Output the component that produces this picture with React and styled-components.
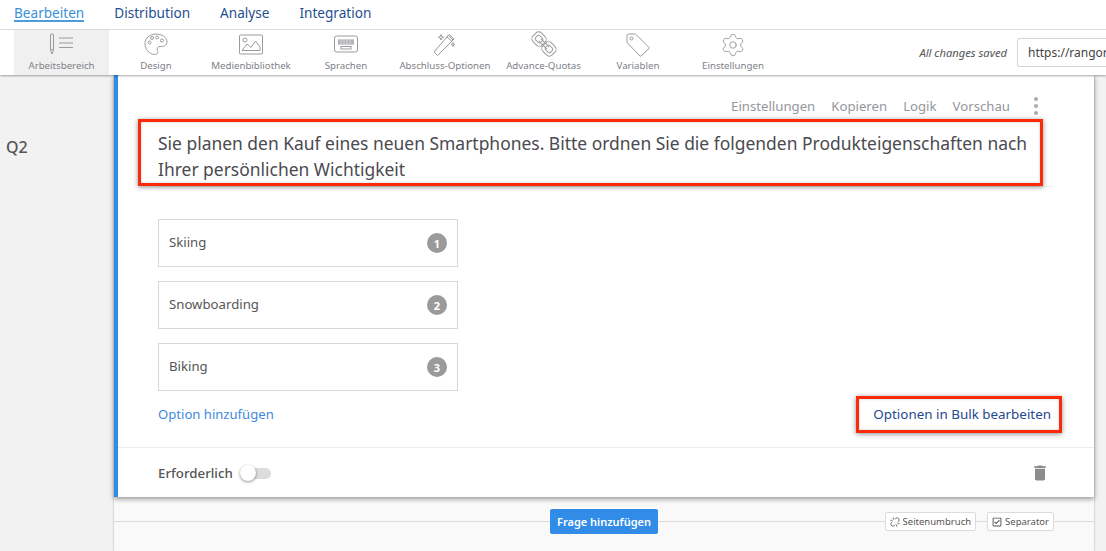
import * as React from 'react'
import styled, { createGlobalStyle } from 'styled-components'
import { Settings, Unlink } from 'lucide-react'
import { FaRegCheckSquare } from 'react-icons/fa'
import { MdDelete } from 'react-icons/md'

const GlobalStyle = createGlobalStyle`
    html, body {
        margin: 0;
        padding: 0;
        background: #f2f2f2;
        overflow: hidden;
    }
    body, button, input {
        font-family: "Noto Sans", "Open Sans", sans-serif;
    }
`;

const Page = styled.div`
    width: 1106px;
    height: 551px;
    overflow: hidden;
    display: flex;
    flex-direction: column;
`;

const Header = styled.header`
    position: relative;
    z-index: 3;
    background: white;
    box-shadow: 0 1px 2px rgba(0, 0, 0, 0.35);
`;

const TopNav = styled.nav`
    height: 29px;
    border-bottom: 1px solid #dcdcdc;
    display: flex;
    padding-left: 14px;
    gap: 30px;
`;

const NavLink = styled.a`
    padding-top: 5px;
    box-sizing: border-box;
    font-size: 13.6px;
    line-height: 16px;
    height: 22px;
    color: ${props => (props.$active ? '#3a8fd9' : '#1f4f8f')};
    border-bottom: ${props => (props.$active ? '2px solid #4a9ddd' : 'none')};
`;

const Toolbar = styled.div`
    height: 45px;
    display: flex;
    padding-left: 14px;
`;

const ToolItem = styled.div`
    flex: none;
    width: ${props => props.$width}px;
    background: ${props => (props.$active ? '#f0f0f0' : 'transparent')};
    display: flex;
    flex-direction: column;
    align-items: center;
`;

const IconSlot = styled.div`
    height: 24px;
    margin-top: 3px;
    display: flex;
    align-items: center;
    justify-content: center;
    color: #999b9f;
    svg {
        display: block;
        flex: none;
        overflow: visible;
    }
`;

const ToolLabel = styled.span`
    font-size: 9.7px;
    line-height: 12px;
    margin-top: 3px;
    color: #7d8187;
    white-space: nowrap;
`;

const SaveArea = styled.div`
    margin-left: auto;
    display: flex;
    align-items: center;
    gap: 10px;
`;

const SavedText = styled.span`
    font-size: 11.2px;
    font-style: italic;
    color: #555;
    white-space: nowrap;
`;

const UrlBox = styled.div`
    width: 89px;
    height: 29px;
    box-sizing: border-box;
    border: 1px solid #d6d6d6;
    border-right: none;
    border-radius: 3px 0 0 3px;
    padding: 0 0 0 10px;
    font-size: 12px;
    line-height: 27px;
    color: #444;
    overflow: hidden;
    white-space: nowrap;
`;

const Body = styled.div`
    flex: 1;
    display: flex;
    min-height: 0;
`;

const Gutter = styled.div`
    width: 114px;
    flex: none;
    padding: 61px 0 0 6px;
    box-sizing: border-box;
    font-size: 16px;
    line-height: 22px;
    font-weight: 500;
    color: #555;
`;

const Column = styled.main`
    width: 980px;
    flex: none;
    display: flex;
    flex-direction: column;
    background: #f9f9f9;
    box-shadow: 0 0 2px rgba(0, 0, 0, 0.3);
`;

const Card = styled.section`
    position: relative;
    height: 422px;
    flex: none;
    box-sizing: border-box;
    background: white;
    border-left: 4px solid #318ce7;
    box-shadow: 0 2px 5px rgba(0, 0, 0, 0.4);
    display: flex;
    flex-direction: column;
    padding-left: 40px;
`;

const ActionRow = styled.div`
    height: 44px;
    padding: 18px 84px 0 0;
    box-sizing: border-box;
    display: flex;
    justify-content: flex-end;
    align-items: center;
    gap: 16px;
    position: relative;
`;

const ActionLink = styled.a`
    font-size: 13.2px;
    color: #94979c;
    white-space: nowrap;
`;

const MoreDots = styled.div`
    position: absolute;
    right: 56px;
    top: 22px;
    display: flex;
    flex-direction: column;
    gap: 3px;
    span {
        width: 4px;
        height: 4px;
        border-radius: 50%;
        background: #aaa;
    }
`;

const Question = styled.h2`
    margin: 11px 40px 0 0;
    padding-bottom: 4px;
    font-size: 17.45px;
    line-height: 26px;
    font-weight: 400;
    color: #4a4a50;
    border-bottom: 1px solid #eee;
`;

const OptionList = styled.div`
    margin-top: 32px;
    display: flex;
    flex-direction: column;
    gap: 14px;
`;

const OptionBox = styled.div`
    width: 300px;
    height: 48px;
    box-sizing: border-box;
    border: 1px solid #d8d8d8;
    padding: 0 10px;
    display: flex;
    align-items: center;
    justify-content: space-between;
    font-size: 13.2px;
    color: #555;
`;

const OptionText = styled.span`
    margin-bottom: 2px;
`;

const Badge = styled.span`
    width: 20px;
    height: 20px;
    border-radius: 50%;
    background: #9a9a9a;
    color: white;
    font-size: 11px;
    font-weight: 700;
    display: flex;
    align-items: center;
    justify-content: center;
`;

const LinkRow = styled.div`
    margin-top: 14px;
    padding-right: 43px;
    display: flex;
    justify-content: space-between;
    line-height: 18px;
`;

const AddLink = styled.a`
    font-size: 13.1px;
    color: #3f8ae0;
`;

const BulkLink = styled.a`
    font-size: 13.4px;
    color: #25498f;
`;

const Footer = styled.div`
    margin: 24px 0 0 -40px;
    flex: 1;
    padding: 0 44px 0 40px;
    border-top: 1px solid #eee;
    display: flex;
    align-items: center;
    font-size: 13.3px;
    font-weight: 500;
    color: #555;
`;

const Toggle = styled.div`
    position: relative;
    margin-left: 7px;
    width: 31px;
    height: 11px;
    border-radius: 6px;
    background: #dcdcdc;
    margin-top: 2px;
    &::before {
        content: '';
        position: absolute;
        left: 0;
        top: -3px;
        width: 16px;
        height: 16px;
        border-radius: 50%;
        background: white;
        box-shadow: 0 1px 3px rgba(0, 0, 0, 0.45);
    }
`;

const TrashButton = styled.div`
    margin-left: auto;
    color: #8c8c8c;
    display: flex;
`;

const Annotation = styled.div`
    position: absolute;
    box-sizing: border-box;
    left: ${props => props.$left}px;
    top: ${props => props.$top}px;
    width: ${props => props.$width}px;
    height: ${props => props.$height}px;
    border: 3px solid #fb2a0a;
    box-shadow: 0 1px 5px rgba(0, 0, 0, 0.45), inset 0 0 3px rgba(0, 0, 0, 0.2);
    pointer-events: none;
`;

const AddBar = styled.div`
    position: relative;
    height: 25px;
    margin-top: 12px;
    display: flex;
    align-items: center;
    &::before {
        content: '';
        position: absolute;
        left: 0;
        right: 0;
        top: 12px;
        height: 1px;
        background: #dcdcdc;
    }
`;

const AddButton = styled.button`
    position: relative;
    margin-left: 436px;
    width: 108px;
    height: 25px;
    border: none;
    border-radius: 2px;
    background: #318ce7;
    color: white;
    font-size: 11px;
    font-weight: 600;
    padding: 0;
`;

const Chips = styled.div`
    position: relative;
    margin-left: auto;
    margin-right: 40px;
    display: flex;
    gap: 11px;
`;

const Chip = styled.div`
    height: 19px;
    box-sizing: border-box;
    padding: 0 4px;
    border: 1px solid #dcdcdc;
    border-radius: 2px;
    background: white;
    display: flex;
    align-items: center;
    gap: 3px;
    font-size: 9.5px;
    color: #555;
    white-space: nowrap;
`;

const iconProps = {
    width: 24,
    height: 24,
    viewBox: '0 0 24 24',
    fill: 'none',
    stroke: 'currentColor',
    strokeWidth: 1,
};

const EditIcon = () => (
    <svg {...iconProps} width="26" viewBox="0 0 26 24">
        <path d="M1.500 2q0-1 1.500-1t1.500 1v15L3 21l-1.500-4z" />
        <path d="M1.500 16.500h3" />
        <path d="M10 5h14M10 10h14M10 14.500h14" />
    </svg>
);

const PaletteIcon = () => (
    <svg {...iconProps}>
        <path d="M12 1C18 1 23 4.500 23 9C23 13 19 13.500 16 13.500C13.500 13.500 12.500 15.500 13.500 17.500C14.500 20 13 22 10.500 21.500C5 21 1 16 1 10.500C1 5 6 1 12 1Z" />
        <circle cx="5.500" cy="9.500" r="1.500" />
        <circle cx="8" cy="5" r="1.500" />
        <circle cx="13" cy="4.500" r="1.500" />
        <circle cx="18" cy="7.500" r="1.500" />
    </svg>
);

const ImageIcon = () => (
    <svg {...iconProps}>
        <rect x="0.500" y="2" width="23" height="19" rx="1" />
        <path d="M3 17.500L8 11l4 3.500L16.500 8l4.500 6v3.500z" />
        <circle cx="6" cy="7" r="2" />
    </svg>
);

const KeyboardIcon = () => (
    <svg {...iconProps}>
        <rect x="0.500" y="3" width="23" height="16" rx="2" />
        <rect x="4" y="6.500" width="16" height="5" fill="currentColor" stroke="none" />
        <path d="M4 8h16M4 10h16M7 6.500v5M10 6.500v5M13 6.500v5M16 6.500v5" stroke="white" strokeWidth="0.5" />
        <rect x="7" y="13.500" width="10" height="2.500" />
    </svg>
);

const WandIcon = () => (
    <svg {...iconProps}>
        <path d="M1 19L16 1.500L21 6L4.500 22.500Z" />
        <path d="M14 4L19 8.500M15.500 2.500L20 7" />
        <path d="M8 1.500l.7 2.100 2 .7-2 .7L8 7l-.7-2-2-.7 2-.7zM20 9.500l.5 1.500 1.500.5-1.500.5-.5 1.500-.5-1.500-1.500-.5 1.500-.5z" />
    </svg>
);

const ChainIcon = () => (
    <svg {...iconProps}>
        <g transform="rotate(-45 12 11)">
            <rect x="6" y="-2.500" width="12" height="13" rx="4" />
            <rect x="9" y="0.500" width="6" height="7" rx="2" />
            <rect x="6" y="11.500" width="12" height="13" rx="4" />
            <rect x="9" y="14.500" width="6" height="7" rx="2" />
            <path d="M10.500 5v12M13.500 5v12" />
        </g>
    </svg>
);

const TagIcon = () => (
    <svg {...iconProps}>
        <path d="M2.500 1H8.500Q9.500 1 10.500 2L23 14.500Q23.500 15 23 15.500L15 23Q14.500 23.500 14 23L1.500 10Q1 9.500 1 8.500V2.500Q1 1 2.500 1Z" />
        <circle cx="5.500" cy="5.500" r="1.500" />
    </svg>
);

const tools = [
    { label: 'Arbeitsbereich', width: 95, icon: <EditIcon />, active: true },
    { label: 'Design', width: 94, icon: <PaletteIcon /> },
    { label: 'Medienbibliothek', width: 96, icon: <ImageIcon /> },
    { label: 'Sprachen', width: 94, icon: <KeyboardIcon /> },
    { label: 'Abschluss-Optionen', width: 104, icon: <WandIcon /> },
    { label: 'Advance-Quotas', width: 93, icon: <ChainIcon /> },
    { label: 'Variablen', width: 96, icon: <TagIcon /> },
    { label: 'Einstellungen', width: 94, icon: <Settings size={26} strokeWidth={0.85} /> },
];

const options = ['Skiing', 'Snowboarding', 'Biking'];

const App = () => {
    return (
        <Page>
            <GlobalStyle />
            <Header>
                <TopNav>
                    <NavLink $active>Bearbeiten</NavLink>
                    <NavLink>Distribution</NavLink>
                    <NavLink>Analyse</NavLink>
                    <NavLink>Integration</NavLink>
                </TopNav>
                <Toolbar>
                    {tools.map(tool => (
                        <ToolItem key={tool.label} $active={tool.active} $width={tool.width}>
                            <IconSlot>{tool.icon}</IconSlot>
                            <ToolLabel>{tool.label}</ToolLabel>
                        </ToolItem>
                    ))}
                    <SaveArea>
                        <SavedText>All changes saved</SavedText>
                        <UrlBox>https://rangor</UrlBox>
                    </SaveArea>
                </Toolbar>
            </Header>
            <Body>
                <Gutter>Q2</Gutter>
                <Column>
                    <Card>
                        <ActionRow>
                            <ActionLink>Einstellungen</ActionLink>
                            <ActionLink>Kopieren</ActionLink>
                            <ActionLink>Logik</ActionLink>
                            <ActionLink>Vorschau</ActionLink>
                            <MoreDots><span /><span /><span /></MoreDots>
                        </ActionRow>
                        <Question>
                            Sie planen den Kauf eines neuen Smartphones. Bitte ordnen Sie die folgenden Produkteigenschaften nach Ihrer persönlichen Wichtigkeit
                        </Question>
                        <OptionList>
                            {options.map((option, i) => (
                                <OptionBox key={option}>
                                    <OptionText>{option}</OptionText>
                                    <Badge>{i + 1}</Badge>
                                </OptionBox>
                            ))}
                        </OptionList>
                        <LinkRow>
                            <AddLink>Option hinzufügen</AddLink>
                            <BulkLink>Optionen in Bulk bearbeiten</BulkLink>
                        </LinkRow>
                        <Footer>
                            Erforderlich
                            <Toggle />
                            <TrashButton><MdDelete size={20} /></TrashButton>
                        </Footer>
                        <Annotation $left={20} $top={44} $width={905} $height={67} />
                        <Annotation $left={738} $top={321} $width={206} $height={37} />
                    </Card>
                    <AddBar>
                        <AddButton>Frage hinzufügen</AddButton>
                        <Chips>
                            <Chip><Unlink size={10} />Seitenumbruch</Chip>
                            <Chip><FaRegCheckSquare size={10} />Separator</Chip>
                        </Chips>
                    </AddBar>
                </Column>
            </Body>
        </Page>
    );
}

export default App;
